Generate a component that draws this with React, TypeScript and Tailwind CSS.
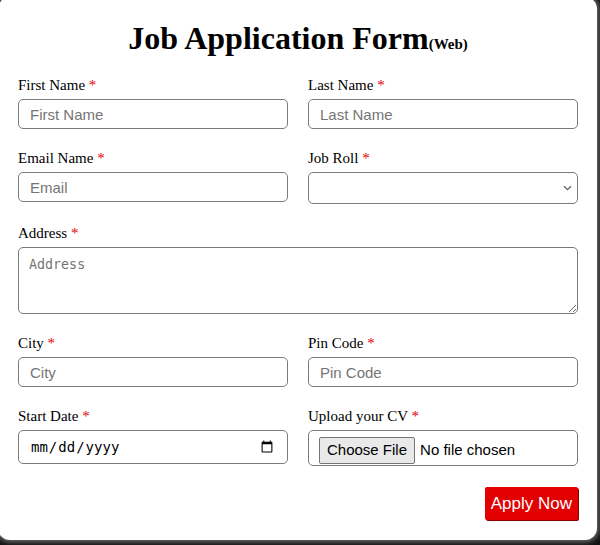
import React from "react";

const serif = "font-['Liberation_Serif','Times_New_Roman',serif]";
const sans = "font-['Liberation_Sans',Arial,sans-serif]";

function Label({ text }: { text: string }) {
  return (
    <label className={`block text-[15px] leading-[18px] text-black mb-[5px] ${serif}`}>
      {text} <span className="text-[#e00000]">*</span>
    </label>
  );
}

const inputCls = `block w-full h-[30px] border border-[#7a7a7a] rounded-[5px] px-[11px] text-[15px] text-black placeholder:text-[#757575] bg-white outline-none ${sans}`;

export default function App() {
  return (
    <div className="h-[545px] w-[600px] bg-[#141414] overflow-hidden">
      <div className="-ml-[2px] -mt-[3px] w-[599px] h-[543px] bg-white rounded-[12px] shadow-[0_0_5px_2px_rgba(150,150,150,0.7)] pt-[23px] pl-[20px] pr-[19px] pb-[20px]">
        <h1 className={`text-center text-[32px] leading-[36px] font-bold text-black ${serif}`}>
          Job Application Form<span className="text-[15px]">(Web)</span>
        </h1>
        <form className="mt-[14px] flex flex-col gap-[20px]" onSubmit={(e) => e.preventDefault()}>
          <div className="grid grid-cols-2 gap-x-[20px]">
            <div>
              <Label text="First Name" />
              <input className={inputCls} placeholder="First Name" />
            </div>
            <div>
              <Label text="Last Name" />
              <input className={inputCls} placeholder="Last Name" />
            </div>
          </div>
          <div className="grid grid-cols-2 gap-x-[20px] items-start">
            <div>
              <Label text="Email Name" />
              <input className={inputCls} placeholder="Email" />
            </div>
            <div>
              <Label text="Job Roll" />
              <div className="relative">
                <select
                  className={`block w-full h-[32px] appearance-none border border-[#7a7a7a] rounded-[5px] px-[6px] text-[15px] bg-white outline-none ${sans}`}
                  defaultValue=""
                >
                  <option value=""></option>
                  <option>Frontend Developer</option>
                  <option>Backend Developer</option>
                </select>
                <svg
                  className="absolute right-[6px] top-[13px] pointer-events-none"
                  width="9"
                  height="6"
                  viewBox="0 0 9 6"
                  fill="none"
                >
                  <path d="M1 1.2L4.5 4.6L8 1.2" stroke="#5f5f5f" strokeWidth="1.3" />
                </svg>
              </div>
            </div>
          </div>
          <div>
            <Label text="Address" />
            <textarea
              className="block w-full h-[67px] border border-[#7a7a7a] rounded-[5px] px-[10px] pt-[9px] text-[13.33px] leading-[16px] font-['DejaVu_Sans_Mono',monospace] placeholder:text-[#757575] bg-white outline-none"
              placeholder="Address"
            />
          </div>
          <div className="grid grid-cols-2 gap-x-[20px]">
            <div>
              <Label text="City" />
              <input className={inputCls} placeholder="City" />
            </div>
            <div>
              <Label text="Pin Code" />
              <input className={inputCls} placeholder="Pin Code" />
            </div>
          </div>
          <div className="grid grid-cols-2 gap-x-[20px] items-start">
            <div>
              <Label text="Start Date" />
              <input
                type="date"
                className="block w-full h-[34px] border border-[#7a7a7a] rounded-[5px] px-[11px] text-[14px] text-black font-['DejaVu_Sans_Mono',monospace] bg-white outline-none"
              />
            </div>
            <div>
              <Label text="Upload your CV" />
              <input
                type="file"
                className={`block w-full h-[36px] border border-[#7a7a7a] rounded-[5px] px-[10px] py-[6px] text-[15px] text-black bg-white ${sans} file:bg-[#e9e9e9] file:border file:border-[#767676] file:rounded-[2px] file:px-[7px] file:py-[1px] file:mr-[5px] file:text-[15px] file:text-black`}
              />
            </div>
          </div>
          <div className="flex justify-end mt-[1px]">
            <button
              type="submit"
              className={`h-[33px] px-[6px] bg-[#e20000] text-white text-[17px] rounded-[2px] shadow-[1px_1px_0_#8a0000] ${sans}`}
            >
              Apply Now
            </button>
          </div>
        </form>
      </div>
    </div>
  );
}
